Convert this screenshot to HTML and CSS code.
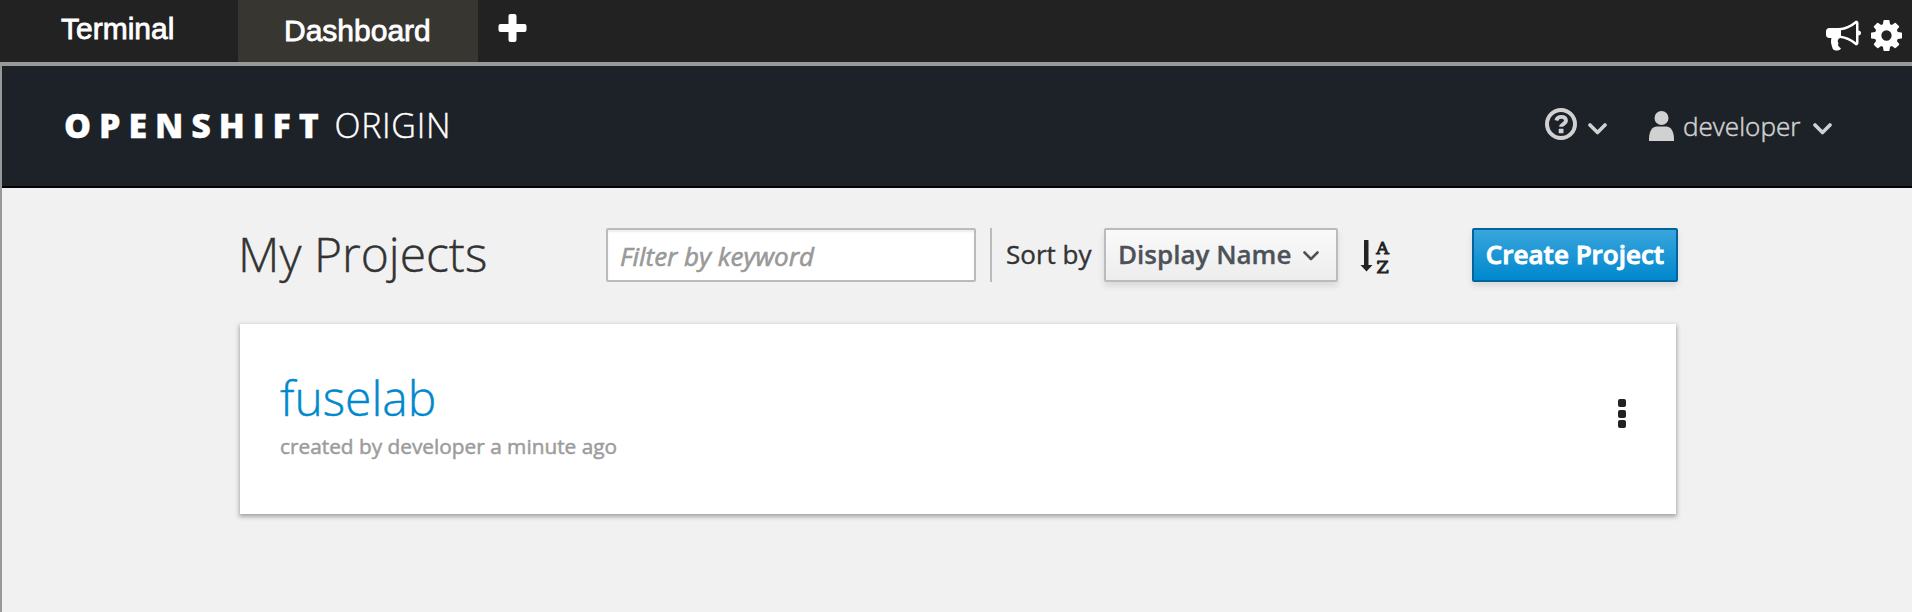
FILE: index.html
```html
<!DOCTYPE html>
<html lang="en">
<head>
<meta charset="utf-8">
<title>OpenShift Origin</title>
<link rel="stylesheet" href="styles.css">
</head>
<body>
<nav class="tabs">
  <a class="tab tab-terminal">Terminal</a>
  <a class="tab tab-dashboard">Dashboard</a>
  <svg class="plus" viewBox="0 0 28 28"><path d="M12 0h4a2 2 0 0 1 2 2v8h8a2 2 0 0 1 2 2v4a2 2 0 0 1-2 2h-8v8a2 2 0 0 1-2 2h-4a2 2 0 0 1-2-2v-8h-8a2 2 0 0 1-2-2v-4a2 2 0 0 1 2-2h8v-8a2 2 0 0 1 2-2z"/></svg>
  <div class="tools">
    <svg class="bullhorn" viewBox="0 128 1792 1536"><path d="M1664 640q53 0 90.500 37.500t37.500 90.500-37.500 90.500-90.500 37.500v384q0 52-38 90t-90 38q-417-347-812-380-58 19-91 66t-31 100.500 40 92.500q-20 33-23 65.500t6 58 33.500 55 48 50 61.500 50.500q-29 58-111.500 83t-168.500 11.500-132-55.500q-7-23-29.500-87.500t-32-94.500-23-89-15-101 3.500-98.500 22-110.500h-122q-66 0-113-47t-47-113v-192q0-66 47-113t113-47h480q435 0 896-384 52 0 90 38t38 90v384zm-128 604v-954q-394 302-768 343v270q377 42 768 341z"/></svg>
    <svg class="cog" viewBox="128 128 1536 1536"><path d="M1152 896q0-106-75-181t-181-75-181 75-75 181 75 181 181 75 181-75 75-181zm512-109v222q0 12-8 23t-20 13l-185 28q-19 54-39 91 35 50 107 138 10 12 10 25t-9 23q-27 37-99 108t-94 71q-12 0-26-9l-138-108q-44 23-91 38-16 136-29 186-7 28-36 28h-222q-14 0-24.500-8.500t-11.500-21.500l-28-184q-49-16-90-37l-141 107q-10 9-25 9-14 0-25-11-126-114-165-168-7-10-7-23 0-12 8-23 15-21 51-66.500t54-70.500q-27-50-41-99l-183-27q-13-2-21-12.500t-8-23.500v-222q0-12 8-23t19-13l186-28q14-46 39-92-40-57-107-138-10-12-10-24 0-10 9-23 26-36 98.500-107.500t94.500-71.500q13 0 26 10l138 107q44-23 91-38 16-136 29-186 7-28 36-28h222q14 0 24.500 8.500t11.500 21.500l28 184q49 16 90 37l142-107q9-9 24-9 13 0 25 10 129 119 165 170 7 8 7 22 0 12-8 23-15 21-51 66.500t-54 70.500q26 50 41 98l183 28q13 2 21 12.500t8 23.500z"/></svg>
  </div>
</nav>
<div class="frame">
  <header class="masthead">
    <div class="brand"><span class="brand-bold">OPENSHIFT</span><span class="brand-light">ORIGIN</span></div>
    <div class="account">
      <svg class="help" viewBox="0 0 32 32"><circle cx="16" cy="16" r="14" fill="none" stroke="#d1d1d1" stroke-width="4"/><path d="M11.300 12.500C12 10 13.600 8.900 16.300 8.900c2.700 0 4.700 1.300 4.700 3.700 0 3.400-4.900 3.500-4.900 6.200" fill="none" stroke="#d1d1d1" stroke-width="3.800"/><rect x="13.700" y="20.800" width="4.800" height="4.400" rx=".6" fill="#d1d1d1"/></svg>
      <svg class="caret caret-help" viewBox="0 0 19 12"><path d="M2 2l7.500 7.500L17 2"/></svg>
      <svg class="user" viewBox="0 0 25 30"><circle cx="12.500" cy="7" r="7"/><path d="M0 30v-2C0 20 3.500 15.500 8 15.500h9c4.500 0 8 4.500 8 12.500v2z"/></svg>
      <span class="username">developer</span>
      <svg class="caret" viewBox="0 0 19 12"><path d="M2 2l7.500 7.500L17 2"/></svg>
    </div>
  </header>
  <main class="content">
    <div class="toolbar">
      <h1 class="title">My Projects</h1>
      <input class="filter" type="text" placeholder="Filter by keyword">
      <div class="divider"></div>
      <span class="sort-label">Sort by</span>
      <button class="select"><span class="select-text">Display Name</span><svg class="select-caret" viewBox="0 0 16 10"><path d="M1.500 1.500L8 8l6.500-6.500"/></svg></button>
      <div class="sort-icon">
        <svg class="sort-arrow" viewBox="0 0 13 34"><path d="M4 1.500q0-.5.500-.5h3.500q.5 0 .5.500v24.500h4L6.500 32.500.500 26H4z"/></svg>
        <div class="sort-letters"><span>A</span><span>Z</span></div>
      </div>
      <button class="create"><span class="create-text">Create Project</span></button>
    </div>
    <section class="card">
      <div class="info">
        <h2 class="name">fuselab</h2>
        <p class="meta">created by developer a minute ago</p>
      </div>
      <div class="kebab"><i class="dot"></i><i class="dot"></i><i class="dot"></i></div>
    </section>
  </main>
</div>
</body>
</html>
```
FILE: styles.css
```css
* { box-sizing: border-box; }
body { margin: 0; height: 612px; overflow: hidden; display: flex; flex-direction: column; background: #f1f1f1; font-family: "Open Sans", "Noto Sans", sans-serif; }
svg { display: block; flex: none; }
.tabs { height: 62px; flex: none; display: flex; background: #222; color: #fff; font: 30px/34px "Liberation Sans", Arial, sans-serif; -webkit-text-stroke: .8px #fff; }
.tab { height: 62px; }
.tab-terminal { width: 238px; padding: 12px 0 0 61px; }
.tab-dashboard { width: 240px; padding: 14px 0 0 46px; background: #373630; }
.plus { width: 29px; height: 28px; margin: 14px 0 0 20px; fill: #fff; }
.tools { margin-left: auto; display: flex; gap: 10px; padding: 19.500px 10px 0 0; fill: #fff; }
.bullhorn { width: 35px; height: 31px; }
.cog { width: 31px; height: 31px; }
.frame { flex: 1; border-top: 4px solid #999; border-left: 2px solid #999; }
.masthead { height: 122px; background: #1d2128; border-bottom: 2px solid #030303; display: flex; justify-content: space-between; padding: 0 80px 0 62px; }
.brand { display: flex; color: #fff; font-size: 34px; line-height: 46px; padding-top: 36px; white-space: nowrap; }
.brand-bold { font-weight: 800; letter-spacing: 7.900px; width: 270.500px; -webkit-text-stroke: .3px #fff; }
.brand-light { font-weight: 300; letter-spacing: .700px; -webkit-text-stroke: .4px #fff; }
.account { display: flex; color: #d1d1d1; }
.help { width: 32px; height: 32px; margin-top: 42px; }
.caret { width: 19px; height: 12px; margin: 57px 0 0 13px; fill: none; stroke: #d1d1d1; stroke-width: 3.600; stroke-linejoin: round; stroke-linecap: round; }
.caret-help { margin-left: 11px; }
.user { width: 25px; height: 30px; margin: 45px 0 0 42px; fill: #d1d1d1; }
.username { width: 117px; margin: 41px 0 0 9px; font-size: 26.100px; line-height: 38px; font-weight: 300; -webkit-text-stroke: .5px #d1d1d1; }
.content { width: 1438px; margin-left: 238px; padding-top: 40px; }
.toolbar { height: 54px; display: flex; }
.title { width: 368px; margin: -7px 0 0 -2px; font-size: 48px; line-height: 66px; font-weight: 300; color: #333; white-space: nowrap; -webkit-text-stroke: .4px #333; }
.filter { width: 370px; height: 54px; border: 2px solid #bbb; border-radius: 2px; padding: 1px 12px 0; background: #fff; box-shadow: inset 0 2px 2px rgba(3,3,3,.075); font: 26px "Open Sans", sans-serif; }
.filter::placeholder { color: #999; opacity: 1; font-style: italic; -webkit-text-stroke: .6px #999; }
.divider { width: 2px; margin: 0 14px; background: #bbb; }
.sort-label { width: 98px; font-size: 26px; line-height: 52px; color: #333; white-space: nowrap; -webkit-text-stroke: .4px #333; }
.select { width: 234px; height: 54px; border: 2px solid #bbb; border-radius: 2px; padding: 0 0 3px 12px; display: flex; align-items: center; background: linear-gradient(#fafafa, #ededed); box-shadow: 0 4px 6px rgba(3,3,3,.1); color: #4d5258; font: 600 26px/36px "Open Sans", sans-serif; white-space: nowrap; -webkit-text-stroke: .3px #4d5258; }
.select-text { width: 185px; text-align: left; }
.select-caret { width: 16px; height: 10px; margin-top: 4px; fill: none; stroke: #4d5258; stroke-width: 2.600; stroke-linecap: round; stroke-linejoin: round; }
.sort-icon { width: 32px; height: 38px; margin: 11px 0 0 22px; display: flex; gap: 2px; color: #222; fill: #222; }
.sort-arrow { width: 13px; height: 34px; }
.sort-letters { width: 15px; display: flex; flex-direction: column; align-items: center; font: 17.500px/18.500px "DejaVu Serif", serif; -webkit-text-stroke: 1px #222; }
.create { width: 206px; height: 54px; margin-left: auto; border: 2px solid #00659c; border-radius: 2px; padding: 0 0 3px; background: linear-gradient(#39a5dc, #0088ce); box-shadow: 0 4px 6px rgba(3,3,3,.1); color: #fff; font: 600 26px/36px "Open Sans", sans-serif; white-space: nowrap; -webkit-text-stroke: .9px #fff; }
.card { width: 1436px; height: 190px; margin-top: 42px; background: #fff; box-shadow: 0 2px 4px 2px rgba(3,3,3,.1), 0 2px 4px rgba(3,3,3,.25); display: flex; justify-content: space-between; padding: 0 50px 0 40px; }
.name { margin: 41px 0 0; font-size: 48px; line-height: 66px; font-weight: 300; color: #0088ce; -webkit-text-stroke: .4px #0088ce; }
.meta { margin: 0; font-size: 20.820px; line-height: 30px; color: #9c9c9c; -webkit-text-stroke: .5px #9c9c9c; }
.kebab { display: flex; flex-direction: column; gap: 2.500px; padding-top: 75px; }
.dot { width: 8px; height: 8px; border-radius: 2px; background: #222; }
```
